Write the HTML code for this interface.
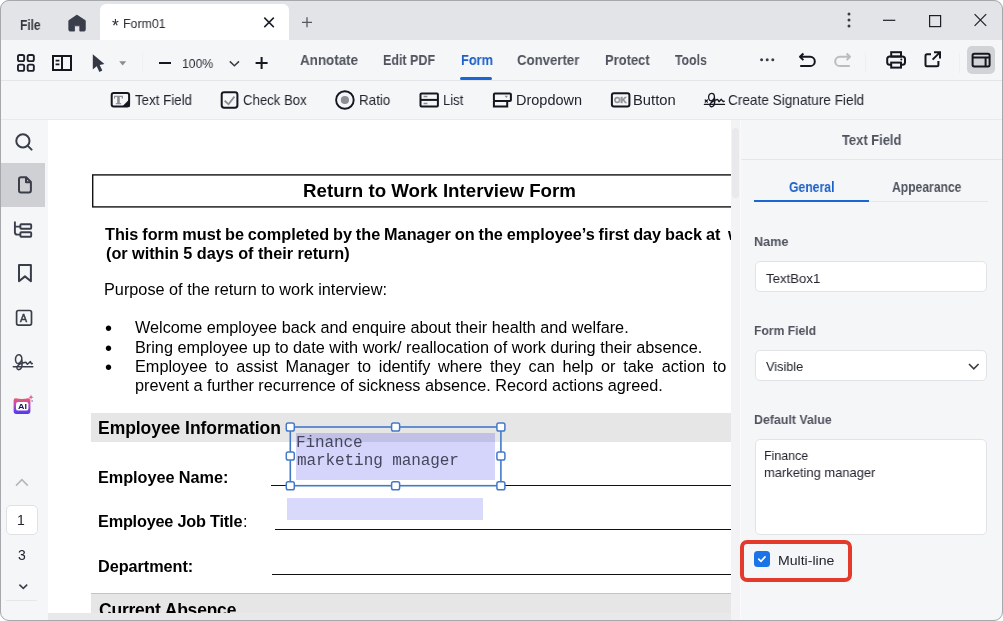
<!DOCTYPE html>
<html><head><meta charset="utf-8"><title>Form01</title>
<style>
*{box-sizing:border-box;margin:0;padding:0}
html,body{width:1003px;height:621px;overflow:hidden;background:#fff}
body{font-family:"Liberation Sans",sans-serif;position:relative}
.win{position:absolute;left:0;top:0;width:1003px;height:621px;border-radius:9px;overflow:hidden;background:#f5f6f8}
.frame{position:absolute;left:0;top:0;width:1003px;height:621px;border:1px solid #a6a8ab;border-radius:9px;pointer-events:none}
.a{position:absolute}
.t{will-change:transform;position:absolute;white-space:pre;line-height:1;display:block;transform-origin:0 0}
.titlebar{left:0;top:0;width:1003px;height:40px;background:#e2e4e7}
.tab{left:100px;top:4px;width:189px;height:36px;background:#fff;border-radius:6px 6px 0 0}
.tb1{left:0;top:40px;width:1003px;height:41px;background:#f5f6f8;border-bottom:1px solid #e4e5e8}
.tb2{left:0;top:81px;width:1003px;height:39px;background:#f5f6f8;border-bottom:1px solid #e9eaed}
.side{left:0;top:120px;width:48px;height:501px;background:#f5f6f8}
.doc{left:48px;top:120px;width:683px;height:493px;background:#fff;overflow:hidden}
.hscroll{left:48px;top:613px;width:683px;height:8px;background:#e9e9ec}
.vscroll{left:731px;top:120px;width:9px;height:501px;background:#f3f3f6}
.vthumb{left:732px;top:128px;width:7px;height:70px;background:#e9e9ed;border-radius:4px}
.panel{left:740px;top:120px;width:263px;height:501px;background:#f5f6f8;border-left:1px solid #fafafb}
.inp{background:#fff;border:1px solid #e2e3e7;border-radius:5px}
</style></head><body>
<div class="win">
<div class="a titlebar"></div>
<div class="a tab"></div>
<div class="a tb1"></div>
<div class="a tb2"></div>
<div class="a side"></div>
<div class="a" style="left:1px;top:163px;width:44px;height:44px;background:#cfd0d3"></div>
<div class="a inp" style="left:6px;top:505px;width:32px;height:30px;border-color:#e0e1e5"></div>
<div class="a" style="left:6px;top:600px;width:31px;height:1px;background:#e6e7ea"></div>
<div class="a doc">
<div class="a" style="left:43px;top:293px;width:700px;height:29px;background:#e6e6e6"></div>
<div class="a" style="left:43px;top:473px;width:700px;height:40px;background:#e6e6e6;border-top:1px solid #c4c4c4"></div>
<div class="a" style="left:223px;top:365px;width:500px;height:1.2px;background:#111"></div>
<div class="a" style="left:227px;top:409px;width:500px;height:1.2px;background:#111"></div>
<div class="a" style="left:224px;top:454px;width:500px;height:1.2px;background:#111"></div>
<div class="a" style="left:248px;top:322px;width:199px;height:38px;background:#d5d5fb"></div>
<div class="a" style="left:248px;top:313px;width:199px;height:9px;background:#c1c1e7"></div>
<div class="a" style="left:239px;top:378px;width:196px;height:22px;background:#d9d9fc"></div>
<svg class="a" style="left:0;top:0" width="683" height="493" viewBox="48 120 683 493" fill="none">
<rect x="92.7" y="174.9" width="700" height="32" stroke="#111" stroke-width="1.4"/>
<rect x="290.3" y="427" width="210.6" height="58.7" stroke="#4479c8" stroke-width="1.6"/>
<g fill="#fff" stroke="#4479c8" stroke-width="1.5">
<rect x="286.3" y="423" width="8" height="8" rx="1.8"/><rect x="391.6" y="423" width="8" height="8" rx="1.8"/><rect x="496.9" y="423" width="8" height="8" rx="1.8"/>
<rect x="286.3" y="452" width="8" height="8" rx="1.8"/><rect x="496.9" y="452" width="8" height="8" rx="1.8"/>
<rect x="286.3" y="481.7" width="8" height="8" rx="1.8"/><rect x="391.6" y="481.7" width="8" height="8" rx="1.8"/><rect x="496.9" y="481.7" width="8" height="8" rx="1.8"/>
</g>
</svg>

<span class="t" style="left:254.50px;top:60px;font-size:18.7px;color:#000;font-weight:700;letter-spacing:0.007px;line-height:21px;">Return to Work Interview Form</span>
<span class="t" style="left:57.40px;top:105px;font-size:16.25px;color:#000;font-weight:700;word-spacing:-0.633px;line-height:18px;">This form must be completed by the Manager on the employee’s first day back at</span>
<span class="t" style="left:680.40px;top:105px;font-size:16.25px;color:#000;font-weight:700;line-height:18px;">work</span>
<span class="t" style="left:57.70px;top:124px;font-size:16.25px;color:#000;font-weight:700;letter-spacing:-0.032px;line-height:18px;">(or within 5 days of their return)</span>
<span class="t" style="left:56.30px;top:160px;font-size:16.25px;color:#000;letter-spacing:0.005px;line-height:18px;">Purpose of the return to work interview:</span>
<span class="t" style="left:57.00px;top:197px;font-size:20px;color:#000;line-height:22px;">•</span>
<span class="t" style="left:57.00px;top:217px;font-size:20px;color:#000;line-height:22px;">•</span>
<span class="t" style="left:57.00px;top:236px;font-size:20px;color:#000;line-height:22px;">•</span>
<span class="t" style="left:86.70px;top:198px;font-size:16.25px;color:#000;letter-spacing:-0.017px;line-height:18px;">Welcome employee back and enquire about their health and welfare.</span>
<span class="t" style="left:86.70px;top:218px;font-size:16.25px;color:#000;letter-spacing:-0.000px;line-height:18px;">Bring employee up to date with work/ reallocation of work during their absence.</span>
<span class="t" style="left:86.70px;top:237px;font-size:16.25px;color:#000;word-spacing:3.242px;line-height:18px;">Employee to assist Manager to identify where they can help or take action to</span>
<span class="t" style="left:86.70px;top:256px;font-size:16.25px;color:#000;letter-spacing:-0.021px;line-height:18px;">prevent a further recurrence of sickness absence. Record actions agreed.</span>
<span class="t" style="left:49.60px;top:298px;font-size:17.5px;color:#000;font-weight:700;letter-spacing:-0.047px;line-height:20px;">Employee Information</span>
<span class="t" style="left:49.60px;top:348px;font-size:16.25px;color:#000;font-weight:700;letter-spacing:-0.049px;line-height:18px;">Employee Name:</span>
<span class="t" style="left:49.60px;top:392px;font-size:16.25px;color:#000;font-weight:700;letter-spacing:-0.198px;line-height:18px;">Employee Job Title</span>
<span class="t" style="left:194.90px;top:392px;font-size:16.25px;color:#000;line-height:18px;">:</span>
<span class="t" style="left:49.60px;top:437px;font-size:16.25px;color:#000;font-weight:700;letter-spacing:-0.050px;line-height:18px;">Department:</span>
<span class="t" style="left:51.20px;top:480px;font-size:17.5px;color:#000;font-weight:700;letter-spacing:-0.213px;line-height:20px;">Current Absence</span>
<span class="t" style="left:248.40px;top:314px;font-size:16px;color:#45455c;font-family:'Liberation Mono',monospace;letter-spacing:-0.102px;line-height:18px;">Finance</span>
<span class="t" style="left:249.20px;top:332px;font-size:16px;color:#45455c;font-family:'Liberation Mono',monospace;letter-spacing:-0.083px;line-height:18px;">marketing manager</span>
</div>
<div class="a vscroll"></div>
<div class="a vthumb"></div>
<div class="a hscroll"></div>
<div class="a panel"></div>
<div class="a" style="left:741px;top:159px;width:262px;height:1px;background:#e6e7ea"></div>
<div class="a" style="left:754px;top:201px;width:234px;height:1px;background:#e6e7ea"></div>
<div class="a" style="left:754px;top:200px;width:115px;height:2px;background:#1a66d2"></div>
<div class="a inp" style="left:755px;top:261px;width:232px;height:31px"></div>
<div class="a inp" style="left:755px;top:350px;width:232px;height:31px"></div>
<div class="a inp" style="left:755px;top:439px;width:232px;height:96px"></div>
<div class="a" style="left:740px;top:540px;width:112px;height:42px;border:4px solid #e43a2b;border-radius:7px"></div>
<div class="a" style="left:754px;top:551px;width:16px;height:16px;background:#1b73e8;border-radius:3.5px"></div>
<div class="a" style="left:967px;top:46px;width:28px;height:28px;background:#d2d3d6;border-radius:5px"></div>
<div class="a" style="left:460px;top:77px;width:32px;height:3px;background:#1a66d2;border-radius:2px"></div>
<div class="a" style="left:142px;top:53px;width:1px;height:20px;background:#eff0f3"></div>
<div class="a" style="left:865px;top:53px;width:1px;height:20px;background:#eeeff2"></div>
<div class="a" style="left:959px;top:53px;width:1px;height:20px;background:#eeeff2"></div>
<svg class="a" style="left:0;top:0" width="1003" height="621" viewBox="0 0 1003 621" fill="none">
<!-- home -->
<path d="M76.9,15.1 L85.3,20.6 V29.8 Q85.3,31.1 84,31.1 H79.8 V25.8 H74.5 V31.1 H70.1 Q68.8,31.1 68.8,29.8 V20.6 Z" fill="#3a3e4b" stroke="#3a3e4b" stroke-width="0.8" stroke-linejoin="round"/>
<!-- tab close, plus -->
<path d="M264.3,17.6 L273.8,27.1 M273.8,17.6 L264.3,27.1" stroke="#1c1f27" stroke-width="1.5"/>
<path d="M302,22.3 H312 M307,17.3 V27.3" stroke="#555861" stroke-width="1.3"/>
<!-- window controls -->
<circle cx="849" cy="14" r="1.5" fill="#3a3d46"/><circle cx="849" cy="20" r="1.5" fill="#3a3d46"/><circle cx="849" cy="26" r="1.5" fill="#3a3d46"/>
<path d="M883,20.3 H895.3" stroke="#1c1f27" stroke-width="1.2"/>
<rect x="929.6" y="15.6" width="11" height="11" stroke="#1c1f27" stroke-width="1.2"/>
<path d="M974.6,14.2 L986.2,25.8 M986.2,14.2 L974.6,25.8" stroke="#1c1f27" stroke-width="1.2"/>
<!-- grid icon -->
<g stroke="#1e212b" stroke-width="1.9">
<rect x="17.95" y="54.95" width="6.2" height="6.2" rx="1.6"/><rect x="27.65" y="54.95" width="6.2" height="6.2" rx="1.6"/>
<rect x="17.95" y="64.65" width="6.2" height="6.2" rx="1.6"/><rect x="27.65" y="64.65" width="6.2" height="6.2" rx="1.6"/>
</g>
<!-- side panel icon -->
<g stroke="#14171f" stroke-width="2">
<rect x="53" y="56" width="18" height="14"/><path d="M62,56 V70"/>
<path d="M55.6,60.6 H59.4 M55.6,64.4 H59.4" stroke-width="1.6"/>
</g>
<!-- cursor -->
<path d="M92.8,54.2 V69.6 L96.7,66.3 L99.4,72 L102.3,70.6 L99.7,65 L104.4,64 Z" fill="#343845"/>
<path d="M119.2,61.2 H126.2 L122.7,65.4 Z" fill="#8c8d92"/>
<!-- minus chevron plus -->
<path d="M159,63 H171" stroke="#14171f" stroke-width="2"/>
<path d="M229.8,61.4 L234.4,65.8 L239,61.4" stroke="#3a3d46" stroke-width="1.5"/>
<path d="M255.6,63 H267.6 M261.6,57 V69" stroke="#14171f" stroke-width="2"/>
<!-- ellipsis -->
<circle cx="761.6" cy="59.8" r="1.5" fill="#3a3d46"/><circle cx="767.2" cy="59.8" r="1.5" fill="#3a3d46"/><circle cx="772.8" cy="59.8" r="1.5" fill="#3a3d46"/>
<!-- undo redo -->
<path d="M800.2,66 H810.2 A4.6,4.6 0 0 0 810.2,56.8 H800.4 M803.4,53.5 L800,56.8 L803.4,60.1" stroke="#14171f" stroke-width="2" stroke-linejoin="round"/>
<path d="M849.8,66 H839.8 A4.6,4.6 0 0 1 839.8,56.8 H849.6 M846.6,53.5 L850,56.8 L846.6,60.1" stroke="#bbbcc0" stroke-width="2" stroke-linejoin="round"/>
<!-- printer -->
<g stroke="#14171f" stroke-width="2">
<rect x="891.2" y="52.2" width="9.8" height="4.4"/>
<rect x="887.2" y="56.4" width="17.8" height="8.4" rx="2.6"/>
<rect x="891.2" y="62.6" width="9.8" height="5" fill="#f5f6f8"/>
</g>
<circle cx="901.3" cy="59.4" r="1" fill="#14171f"/>
<!-- export -->
<path d="M931,54.2 H927 Q925.5,54.2 925.5,55.7 V64.8 Q925.5,66.3 927,66.3 H936.9 Q938.4,66.3 938.4,64.8 V61 M932.6,59.6 L939.6,52.6 M934,52.2 H940 V58.6" stroke="#14171f" stroke-width="2"/>
<!-- panel toggle -->
<g stroke="#14171f" stroke-width="2"><rect x="972.6" y="53.8" width="17" height="12.6" rx="1.6"/><path d="M972.6,57.6 H989.6 M985.6,57.6 V66.4"/></g>
<!-- text field icon -->
<rect x="111.7" y="93.1" width="17.4" height="13.5" rx="2" stroke="#14171f" stroke-width="2"/>
<path d="M129.6,99 V107.1 H121.8 Z" fill="#14171f"/>
<!-- checkbox icon -->
<rect x="221.7" y="92.2" width="15.7" height="15.5" rx="2.4" stroke="#14171f" stroke-width="2"/>
<path d="M224.6,100.8 L228.5,104.2 L234.4,96.6" stroke="#8c8d92" stroke-width="1.8"/>
<!-- radio -->
<circle cx="344.9" cy="100" r="8.8" stroke="#14171f" stroke-width="1.9"/><circle cx="344.9" cy="100" r="4.1" fill="#8e8f94"/>
<!-- list -->
<g stroke="#14171f" stroke-width="2"><rect x="420.5" y="93.4" width="17.4" height="13" rx="1"/><path d="M420.5,99.9 H437.9"/></g>
<path d="M423.6,96.5 H427.4 M423.6,103.5 H427.4" stroke="#8c8d92" stroke-width="1.4"/>
<!-- dropdown -->
<g stroke="#14171f" stroke-width="2"><rect x="493.9" y="93.4" width="17" height="7.6" rx="1"/><path d="M493.9,101 V106.4 H507.2 V101"/></g>
<path d="M504.6,95.8 H508 L506.3,97.9 Z" fill="#8c8d92"/>
<!-- ok button -->
<rect x="611.9" y="93.3" width="17.5" height="13.3" rx="2" stroke="#14171f" stroke-width="2"/>
<!-- signature (toolbar) -->
<g stroke="#14171f" stroke-width="1.3" stroke-linecap="round" stroke-linejoin="round">
<path d="M704.4,104.4 H724.5"/>
<path d="M705.2,100 L707.4,102.2 M707.4,100 L705.2,102.2" stroke-width="1.2"/>
<path d="M714.4,97 C714.6,94.6 713.3,93.3 711.6,93.3 C709.6,93.3 708.4,95.3 708.6,97.8 C708.8,100.2 710.2,101.3 711.8,100.6 C713.2,100 714.2,98.6 714.4,97 C714.9,100 715,103 714.1,105 C713.3,106.8 711.2,107.3 710.2,106.1 C709.2,104.9 710.5,102.9 712.5,101.6 C714,100.6 715.6,99.9 717.6,99.4 L719,101.7 L721.3,99.3 L723.2,101.7 L724.3,101.2"/>
</g>
<!-- sidebar: search -->
<g stroke="#3a3e4a" stroke-width="2" stroke-linecap="round"><circle cx="22.9" cy="140.9" r="6.6"/><path d="M27.8,145.9 L31.6,149.6"/></g>
<!-- page -->
<path d="M19,179.3 Q19,177.3 21,177.3 H26.2 L30.9,182 V190.4 Q30.9,192.4 28.9,192.4 H21 Q19,192.4 19,190.4 Z M26,177.5 V182.2 H30.7" stroke="#3a3e4a" stroke-width="2" stroke-linejoin="round"/>
<!-- tree -->
<g stroke="#3a3e4a" stroke-width="1.9"><path d="M14.9,221.6 V232.2 Q14.9,234.6 17.3,234.6 H20 M14.9,226.6 H20"/><rect x="20.4" y="224.2" width="10.8" height="4.6" rx="0.7"/><rect x="20.4" y="232.2" width="10.8" height="4.6" rx="0.7"/></g>
<!-- bookmark -->
<path d="M19,265 H30.9 V281.2 L24.95,276.4 L19,281.2 Z" stroke="#3a3e4a" stroke-width="2" stroke-linejoin="round"/>
<!-- A box -->
<rect x="16.6" y="310.5" width="14.9" height="14.6" rx="1.8" stroke="#3a3e4a" stroke-width="1.7"/>
<!-- signature (sidebar) -->
<g stroke="#3a3e4a" stroke-width="1.5" stroke-linecap="round" stroke-linejoin="round">
<path d="M13.3,366.7 H32.8"/>
<path d="M21.8,359 C22,356.4 20.6,354.8 18.8,354.8 C16.6,354.8 15.3,357 15.5,360 C15.7,362.8 17.2,364 19,363.2 C20.6,362.5 21.6,361 21.8,359 C22.3,362.5 22.3,365.5 21.4,367.6 C20.5,369.7 18.2,370.2 17.2,368.9 C16.2,367.5 17.6,365.4 19.8,364.2 C21.6,363.2 23.6,362.6 25.8,362.2 L27.4,364.2 L30.4,361.6 L31.4,363.8 L32.3,363.6"/>
</g>
<!-- AI icon -->
<defs><linearGradient id="aig" x1="0" y1="0" x2="0" y2="1"><stop offset="0" stop-color="#ec5a6a"/><stop offset="0.45" stop-color="#b548c8"/><stop offset="1" stop-color="#4a3af2"/></linearGradient></defs>
<path d="M13.6,400.5 Q13.6,398 16,398.3 Q22,399.6 28,398.3 Q30.4,398 30.4,400.5 V411.6 Q30.4,414 28,414 H16 Q13.6,414 13.6,411.6 Z" fill="url(#aig)"/>
<rect x="16" y="402" width="12.4" height="8.6" rx="2.2" fill="#fff"/>
<path d="M31,394.6 L31.7,396.5 L33.6,397.2 L31.7,397.9 L31,399.8 L30.3,397.9 L28.4,397.2 L30.3,396.5 Z" fill="#e85a9a"/>
<circle cx="32.1" cy="401" r="0.8" fill="#7a4ae0"/>
<!-- page nav -->
<path d="M16,485.6 L21.9,479.6 L27.8,485.6" stroke="#b4b5ba" stroke-width="1.5"/>
<path d="M19.4,584.6 L23.3,588.4 L27.2,584.6" stroke="#3a3e4a" stroke-width="1.5"/>
<!-- select chevron -->
<path d="M969,364 L973.8,368.8 L978.6,364" stroke="#3a3d46" stroke-width="1.6"/>
<!-- check mark in checkbox -->
<path d="M758.8,559.2 L761,561.3 L765,556.9" stroke="#fff" stroke-width="1.7" stroke-linecap="round" stroke-linejoin="round"/>

</svg>
<span class="t" style="left:20.30px;top:17px;font-size:14.2px;color:#33363f;font-weight:700;transform:scaleX(0.8432);line-height:16px;">File</span>
<span class="t" style="left:111.95px;top:16px;font-size:17.5px;color:#2a2d36;line-height:20px;">*</span>
<span class="t" style="left:122.86px;top:16px;font-size:13.2px;color:#2a2d36;transform:scaleX(0.9388);line-height:15px;">Form01</span>
<span class="t" style="left:182.08px;top:56px;font-size:13.2px;color:#2a2d36;transform:scaleX(0.9242);line-height:15px;">100%</span>
<span class="t" style="left:299.60px;top:52px;font-size:14.2px;color:#50535e;font-weight:700;transform:scaleX(0.9450);line-height:16px;">Annotate</span>
<span class="t" style="left:382.70px;top:52px;font-size:14.2px;color:#50535e;font-weight:700;transform:scaleX(0.8798);line-height:16px;">Edit PDF</span>
<span class="t" style="left:460.80px;top:52px;font-size:14.2px;color:#1c60c9;font-weight:700;transform:scaleX(0.9038);line-height:16px;">Form</span>
<span class="t" style="left:517.00px;top:52px;font-size:14.2px;color:#50535e;font-weight:700;transform:scaleX(0.9304);line-height:16px;">Converter</span>
<span class="t" style="left:604.70px;top:52px;font-size:14.2px;color:#50535e;font-weight:700;transform:scaleX(0.9114);line-height:16px;">Protect</span>
<span class="t" style="left:674.50px;top:52px;font-size:14.2px;color:#50535e;font-weight:700;transform:scaleX(0.8648);line-height:16px;">Tools</span>
<span class="t" style="left:134.90px;top:92px;font-size:14.2px;color:#22252e;transform:scaleX(0.9378);line-height:16px;">Text Field</span>
<span class="t" style="left:243.30px;top:92px;font-size:14.2px;color:#22252e;transform:scaleX(0.9283);line-height:16px;">Check Box</span>
<span class="t" style="left:358.96px;top:92px;font-size:14.2px;color:#22252e;transform:scaleX(0.9432);line-height:16px;">Ratio</span>
<span class="t" style="left:442.98px;top:92px;font-size:14.2px;color:#22252e;transform:scaleX(0.9179);line-height:16px;">List</span>
<span class="t" style="left:515.88px;top:92px;font-size:14.2px;color:#22252e;transform:scaleX(1.0211);line-height:16px;">Dropdown</span>
<span class="t" style="left:633.46px;top:92px;font-size:14.2px;color:#22252e;transform:scaleX(1.0402);line-height:16px;">Button</span>
<span class="t" style="left:727.90px;top:92px;font-size:14.2px;color:#22252e;transform:scaleX(0.9592);line-height:16px;">Create Signature Field</span>
<span class="t" style="left:113.60px;top:92px;font-size:13.4px;color:#8c8d92;font-weight:700;font-family:'Liberation Serif',serif;line-height:15px;-webkit-text-stroke:0.5px #8c8d92;">T</span>
<span class="t" style="left:614.20px;top:94px;font-size:9.4px;color:#8e8f94;font-weight:700;transform:scaleX(0.8956);line-height:11px;-webkit-text-stroke:0.5px #8e8f94;">OK</span>
<span class="t" style="left:20.10px;top:312px;font-size:10.6px;color:#3a3e4a;line-height:12px;-webkit-text-stroke:0.5px #3a3e4a;">A</span>
<span class="t" style="left:17.80px;top:402px;font-size:7.6px;color:#1a1850;font-weight:700;transform:scaleX(1.1758);line-height:9px;">AI</span>
<span class="t" style="left:17.25px;top:512px;font-size:14px;color:#22252e;line-height:16px;">1</span>
<span class="t" style="left:18.05px;top:547px;font-size:14px;color:#22252e;line-height:16px;">3</span>
<span class="t" style="left:841.70px;top:132px;font-size:14.2px;color:#50535e;font-weight:700;transform:scaleX(0.9116);line-height:16px;">Text Field</span>
<span class="t" style="left:789.30px;top:179px;font-size:14.2px;color:#1c60c9;font-weight:700;transform:scaleX(0.8594);line-height:16px;">General</span>
<span class="t" style="left:891.50px;top:179px;font-size:14.2px;color:#50535e;font-weight:700;transform:scaleX(0.8546);line-height:16px;">Appearance</span>
<span class="t" style="left:754.10px;top:234px;font-size:13.5px;color:#50535e;font-weight:700;transform:scaleX(0.9366);line-height:15px;">Name</span>
<span class="t" style="left:766.20px;top:271px;font-size:13.5px;color:#22252e;transform:scaleX(0.9778);line-height:15px;">TextBox1</span>
<span class="t" style="left:754.10px;top:323px;font-size:13.5px;color:#50535e;font-weight:700;transform:scaleX(0.9003);line-height:15px;">Form Field</span>
<span class="t" style="left:766.20px;top:359px;font-size:13.5px;color:#22252e;transform:scaleX(0.9406);line-height:15px;">Visible</span>
<span class="t" style="left:754.10px;top:412px;font-size:13.5px;color:#50535e;font-weight:700;transform:scaleX(0.9171);line-height:15px;">Default Value</span>
<span class="t" style="left:763.68px;top:448px;font-size:13.5px;color:#22252e;transform:scaleX(0.9200);line-height:15px;">Finance</span>
<span class="t" style="left:764.40px;top:465px;font-size:13.5px;color:#22252e;transform:scaleX(0.9580);line-height:15px;">marketing manager</span>
<span class="t" style="left:777.76px;top:553px;font-size:13.5px;color:#22252e;transform:scaleX(1.0437);line-height:15px;">Multi-line</span>
</div>
<div class="frame"></div>
</body></html>
